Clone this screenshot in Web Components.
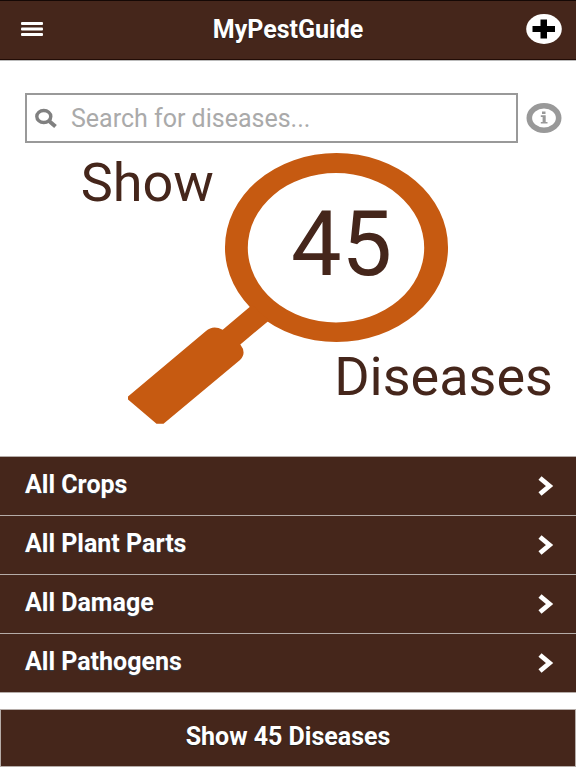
<!DOCTYPE html>
<html lang="en">
<head>
<meta charset="utf-8">
<meta name="viewport" content="width=device-width, initial-scale=1">
<title>MyPestGuide</title>
<style>
    html{
        --brown: #45261b;
        --orange: #c65a11;
        --line: #b5aca8;
        --grey: #999;
    }
    body{
        margin: 0;
        background-color: white;
        font-family: Roboto, "Liberation Sans", sans-serif;
    }
</style>
</head>
<body>

<pest-header>MyPestGuide</pest-header>
<main>
    <pest-search placeholder="Search for diseases..."></pest-search>
    <pest-lens>
        <span slot="before">Show</span>
        <span slot="count">45</span>
        <span slot="after">Diseases</span>
    </pest-lens>
    <pest-filters>
        <pest-filter>All Crops</pest-filter>
        <pest-filter>All Plant Parts</pest-filter>
        <pest-filter>All Damage</pest-filter>
        <pest-filter>All Pathogens</pest-filter>
    </pest-filters>
    <pest-submit>Show 45 Diseases</pest-submit>
</main>

<template id="headerTemplate">
    <style>
        :host{
            display: block;
            background-color: var(--brown);
            border-top: 1px solid #150805;
            border-bottom: 1px solid #220c06;
            box-shadow: 0 1px 0 #bbb;
            color: white;
        }
        header{
            display: grid;
            grid-template-columns: 48px 1fr 48px;
            align-items: center;
            height: 58px;
            padding: 0 8px;
        }
        h1{
            margin: 0;
            font-size: 25px;
            line-height: 28px;
            text-align: center;
            text-shadow: 0 1px 1px #222;
        }
        button{
            display: flex;
            align-items: center;
            justify-content: center;
            height: 48px;
            padding: 0 0 2px;
            border: 0;
            background: none;
        }
    </style>
    <header>
        <button type="button" aria-label="Menu">
            <svg width="24" height="16" viewBox="0 0 24 16" fill="#fff">
                <rect x="1" y="1" width="22" height="3" rx="1"/>
                <rect x="1" y="6.500" width="22" height="3" rx="1"/>
                <rect x="1" y="12" width="22" height="3" rx="1"/>
            </svg>
        </button>
        <h1><slot></slot></h1>
        <button type="button" aria-label="Add">
            <svg width="36" height="30" viewBox="0 0 36 30">
                <ellipse cx="18" cy="15" rx="17.800" ry="14.900" fill="#fff"/>
                <path d="M14.500 5.500h6.500v6.500h8v6h-8v6.500h-6.500V18h-8v-6h8z" fill="#000"/>
            </svg>
        </button>
    </header>
</template>

<template id="searchTemplate">
    <style>
        :host{
            display: block;
            padding: 33px 14px 10px 25px;
        }
        form{
            display: flex;
            align-items: center;
            gap: 8px;
        }
        .field{
            display: flex;
            flex: 1;
            align-items: center;
            box-sizing: border-box;
            height: 50px;
            padding-left: 8px;
            border: 2px solid var(--grey);
        }
        label{
            display: flex;
            width: 36px;
        }
        input{
            flex: 1;
            min-width: 0;
            height: 40px;
            padding: 0;
            border: 0;
            outline: 0;
            background: none;
            color: #333;
            font: 25px/28px Roboto, "Liberation Sans", sans-serif;
        }
        input::placeholder{
            color: #aaa;
            opacity: 1;
        }
        button{
            display: flex;
            padding: 0;
            border: 0;
            background: none;
        }
    </style>
    <form>
        <div class="field">
            <label for="query" aria-label="Search">
                <svg width="22" height="20" viewBox="0 0 22 20" fill="none" stroke="#808080">
                    <ellipse cx="8.800" cy="8.500" rx="7" ry="6" stroke-width="3.400"/>
                    <path d="M13.500 12.500l7 6" stroke-width="4"/>
                </svg>
            </label>
            <input id="query" type="text">
        </div>
        <button type="button" aria-label="Information">
            <svg width="36" height="30" viewBox="0 0 36 30">
                <ellipse cx="18" cy="15" rx="14.700" ry="12.200" fill="none" stroke="#999" stroke-width="5.600"/>
                <path d="M16 8.500h3.500v2.400H16zM14.800 12.300h4.900v6.600h1.800v1.600h-6.700v-1.600h1.800v-5h-1.800z" fill="#999"/>
            </svg>
        </button>
    </form>
</template>

<template id="lensTemplate">
    <style>
        :host{
            display: block;
            position: relative;
            color: var(--brown);
            font-size: 54px;
            line-height: 60px;
        }
        svg{
            display: block;
            width: 100%;
            height: auto;
            fill: var(--orange);
        }
        /* the words lie over the drawing */
        div{
            position: absolute;
        }
        .before{
            top: 0;
            left: 14%;
        }
        .count{
            top: 16%;
            left: 43%;
            width: 32.6%;
            font-size: 90px;
            line-height: 88px;
            text-align: center;
        }
        .after{
            top: 64%;
            right: 4%;
        }
    </style>
    <svg viewBox="0 0 576 303" aria-hidden="true">
        <path fill-rule="evenodd" d="M336.500 0a111.500 94.500 0 1 0 0 189a111.500 94.500 0 1 0 0-189zM336 20a88.200 74.700 0 1 1 0 149.400a88.200 74.700 0 1 1 0-149.400z"/>
        <path d="M252 152L222.700 176.700Q213 171.500 206 178L128 243.500V246.500L156.500 270.700H163.500L240 207Q247 200 240.300 191.500L269 167.500z"/>
    </svg>
    <div class="before"><slot name="before"></slot></div>
    <div class="count"><slot name="count"></slot></div>
    <div class="after"><slot name="after"></slot></div>
</template>

<template id="filtersTemplate">
    <style>
        :host{
            display: block;
            border-top: 1px solid var(--line);
        }
    </style>
    <slot></slot>
</template>

<template id="filterTemplate">
    <style>
        :host{
            display: block;
        }
        button{
            display: flex;
            align-items: center;
            justify-content: space-between;
            box-sizing: border-box;
            width: 100%;
            height: 59px;
            padding: 0 22px 0 25px;
            border: 0;
            border-bottom: 1px solid var(--line);
            background-color: var(--brown);
            color: white;
            font: bold 25px/28px Roboto, "Liberation Sans", sans-serif;
            text-shadow: 0 1px 1px #345;
        }
        span{
            padding-bottom: 2px;
        }
    </style>
    <button type="button">
        <span><slot></slot></span>
        <svg width="16" height="20" viewBox="0 0 16 20" fill="none" stroke="#fff" stroke-width="4.800" aria-hidden="true">
            <path d="M2 2l9.500 8L2 18"/>
        </svg>
    </button>
</template>

<template id="submitTemplate">
    <style>
        :host{
            display: block;
            padding-top: 16px;
        }
        button{
            display: block;
            box-sizing: border-box;
            width: 100%;
            height: 58px;
            padding: 0 0 2px;
            border: 1px solid var(--line);
            background-color: var(--brown);
            color: white;
            font: bold 25px/28px Roboto, "Liberation Sans", sans-serif;
            text-shadow: 0 1px 1px #222;
        }
    </style>
    <button type="button"><slot></slot></button>
</template>

<script>

    (function pestGuide(customElements) {
        'use strict';

        class PestElement extends HTMLElement {

            constructor(templateId){
                super();

                const shadowRoot = this.attachShadow({mode:'open'});
                const templ = document.querySelector(templateId);
                shadowRoot.appendChild(document.importNode(templ.content,true));
            }

        }

        class PestHeader extends PestElement {
            constructor(){
                super('#headerTemplate');
            }
        }

        class PestSearch extends PestElement {

            constructor(){
                super('#searchTemplate');
            }

            connectedCallback(){
                this.shadowRoot.querySelector('input').placeholder = this.getAttribute('placeholder') || '';
                this.shadowRoot.querySelector('form').addEventListener('submit',this._onSubmit.bind(this));
            }

            _onSubmit(event){
                event.preventDefault();

                const query = this.shadowRoot.querySelector('input').value;
                this.dispatchEvent(new CustomEvent('pest-search',{bubbles: true, composed: true, detail:{query:query}}));
            }

        }

        class PestLens extends PestElement {
            constructor(){
                super('#lensTemplate');
            }
        }

        class PestFilters extends PestElement {
            constructor(){
                super('#filtersTemplate');
            }
        }

        class PestFilter extends PestElement {

            constructor(){
                super('#filterTemplate');
            }

            connectedCallback(){
                this.shadowRoot.querySelector('button').addEventListener('click',this._onClick.bind(this));
            }

            _onClick(){
                this.dispatchEvent(new CustomEvent('filter-open',{bubbles: true, composed: true, detail:{name:this.textContent}}));
            }

        }

        class PestSubmit extends PestElement {
            constructor(){
                super('#submitTemplate');
            }
        }

        customElements.define('pest-header',PestHeader);
        customElements.define('pest-search',PestSearch);
        customElements.define('pest-lens',PestLens);
        customElements.define('pest-filters',PestFilters);
        customElements.define('pest-filter',PestFilter);
        customElements.define('pest-submit',PestSubmit);
    })(window.customElements);
</script>
</body>
</html>
